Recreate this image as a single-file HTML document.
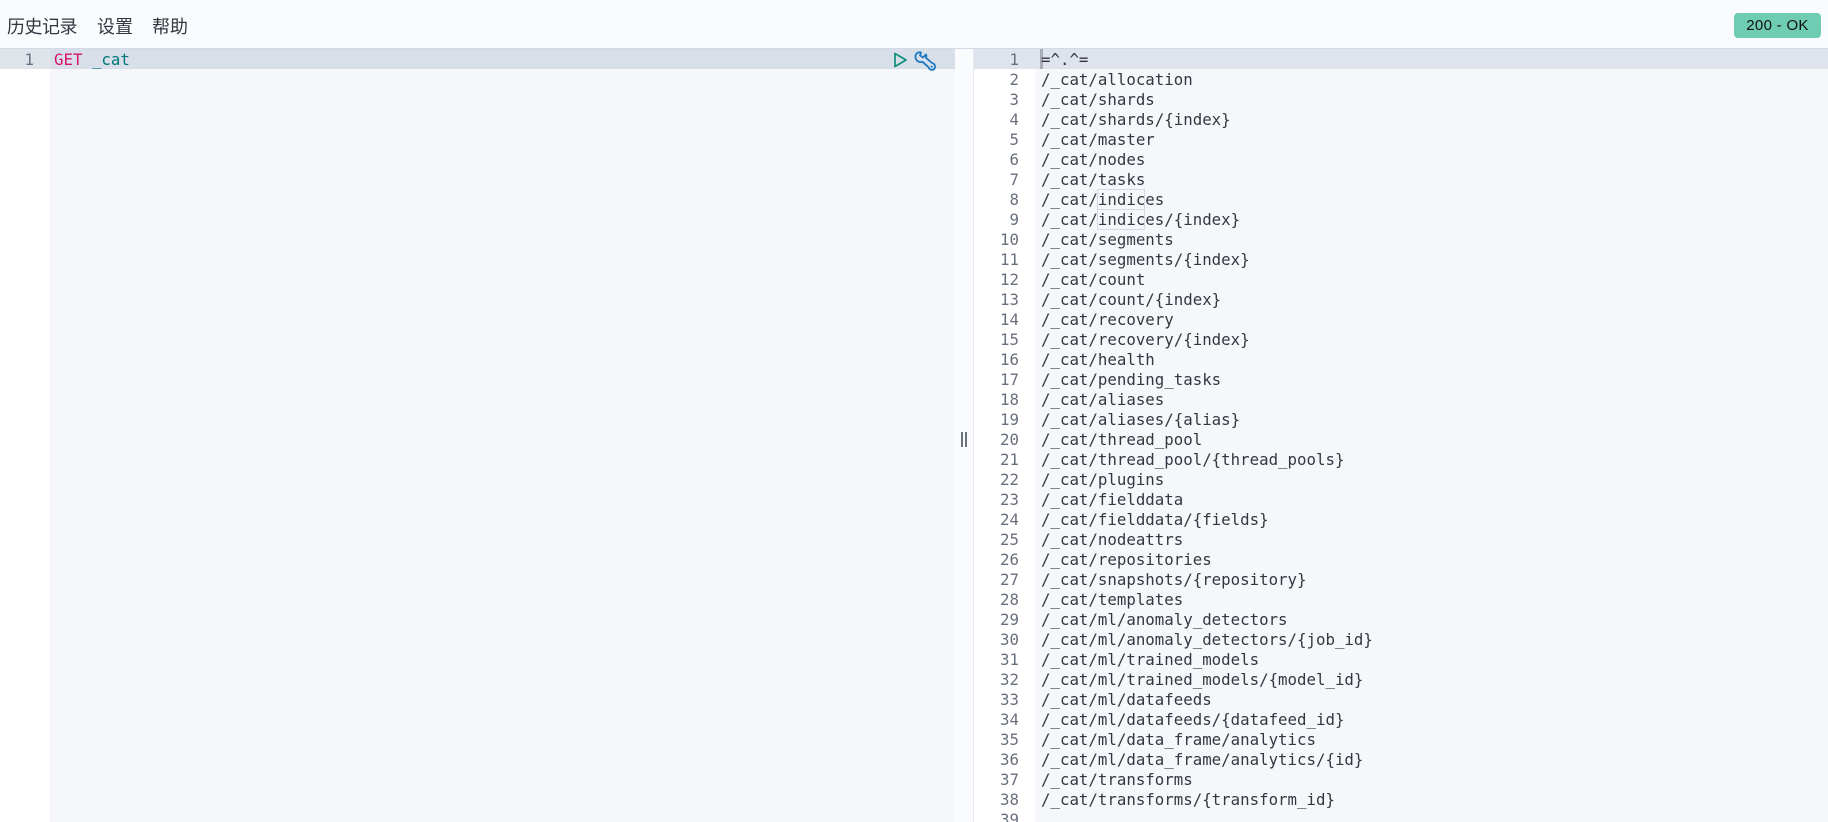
<!DOCTYPE html>
<html lang="zh">
<head>
<meta charset="utf-8">
<style>
html,body{margin:0;padding:0;width:1828px;height:822px;overflow:hidden;background:#fff}
body{position:relative;font-family:"Liberation Sans","Noto Sans CJK SC",sans-serif}
.abs{position:absolute}
#nav{left:0;top:0;width:1828px;height:48px;background:#fafbfd;border-bottom:1px solid #d3dae6;box-sizing:content-box}
.m{position:absolute;top:14px;font-size:18px;line-height:24px;color:#343741;white-space:nowrap;font-family:"Noto Sans CJK SC",sans-serif}
#badge{left:1734px;top:13px;width:87px;height:25px;background:#6dccb1;border-radius:4px;font-size:15px;letter-spacing:.3px;line-height:25px;text-align:center;color:#111}
.code{font-family:"DejaVu Sans Mono","Liberation Mono",monospace;font-size:15.75px;line-height:20px;white-space:pre}
.g{color:#69707d;text-align:right}
.sel{position:absolute;box-sizing:border-box;left:1097px;width:48px;height:21px;border:1px solid #d3dae6}
</style>
</head>
<body>
<div class="abs" id="nav"></div>
<div class="m" style="left:7px;letter-spacing:-.5px">历史记录</div>
<div class="m" style="left:97px">设置</div>
<div class="m" style="left:152px">帮助</div>
<div class="abs" id="badge">200 - OK</div>

<div class="abs" style="left:50px;top:49px;width:905px;height:773px;background:#f5f7fa"></div>
<div class="abs" style="left:955px;top:49px;width:18px;height:773px;background:#fafbfd"></div>
<div class="abs" style="left:973px;top:49px;width:1px;height:773px;background:#e6e9f0"></div>
<div class="abs" style="left:1035px;top:49px;width:793px;height:773px;background:#f5f7fa"></div>

<div class="abs" style="left:0;top:49px;width:50px;height:20px;background:#dfe3ea"></div>
<div class="abs" style="left:50px;top:49px;width:905px;height:20px;background:#d8dfe8"></div>
<div class="abs" style="left:974px;top:49px;width:854px;height:20px;background:#dfe3ec"></div>
<div class="abs" style="left:1040px;top:49px;width:3px;height:20px;background:#a9adb5"></div>
<div class="sel" style="top:189px"></div>
<div class="sel" style="top:209px"></div>

<div class="abs code g" style="left:0;top:50px;width:34px">1</div>
<div class="abs code" style="left:54px;top:50px"><span style="color:#d6156c">GET</span> <span style="color:#00777a">_cat</span></div>

<svg class="abs" style="left:890px;top:50px" width="60" height="24" viewBox="0 0 60 24" fill="none">
<path d="M5 3.500 L16 10 L5 16.500 Z" stroke="#0f8f7e" stroke-width="1.700" stroke-linejoin="round"/>
<path d="M31 2.500 C28 1.500 25.300 3.800 25.500 7 C25.700 10.500 29 13 32.500 11.800 L38.500 17.200 C39.500 20.500 44.500 20.800 45 17.300 C45.400 15 44 13.500 42 13 L36 7.800 C36.500 6.800 36.500 5.500 36 4.500 L33 7.500 L30 5.300 Z" stroke="#1a78c2" stroke-width="1.800" stroke-linejoin="round"/>
<circle cx="41.700" cy="16.800" r="1" fill="#1a78c2"/>
</svg>

<div class="abs" style="left:961px;top:432px;width:2px;height:15px;background:#6b7280"></div>
<div class="abs" style="left:965px;top:432px;width:2px;height:15px;background:#6b7280"></div>

<div class="abs code g" style="left:974px;top:50px;width:45px">1
2
3
4
5
6
7
8
9
10
11
12
13
14
15
16
17
18
19
20
21
22
23
24
25
26
27
28
29
30
31
32
33
34
35
36
37
38
39</div>

<div class="abs code" style="left:1041px;top:50px;color:#343741">=^.^=
/_cat/allocation
/_cat/shards
/_cat/shards/{index}
/_cat/master
/_cat/nodes
/_cat/tasks
/_cat/indices
/_cat/indices/{index}
/_cat/segments
/_cat/segments/{index}
/_cat/count
/_cat/count/{index}
/_cat/recovery
/_cat/recovery/{index}
/_cat/health
/_cat/pending_tasks
/_cat/aliases
/_cat/aliases/{alias}
/_cat/thread_pool
/_cat/thread_pool/{thread_pools}
/_cat/plugins
/_cat/fielddata
/_cat/fielddata/{fields}
/_cat/nodeattrs
/_cat/repositories
/_cat/snapshots/{repository}
/_cat/templates
/_cat/ml/anomaly_detectors
/_cat/ml/anomaly_detectors/{job_id}
/_cat/ml/trained_models
/_cat/ml/trained_models/{model_id}
/_cat/ml/datafeeds
/_cat/ml/datafeeds/{datafeed_id}
/_cat/ml/data_frame/analytics
/_cat/ml/data_frame/analytics/{id}
/_cat/transforms
/_cat/transforms/{transform_id}</div>
</body>
</html>
